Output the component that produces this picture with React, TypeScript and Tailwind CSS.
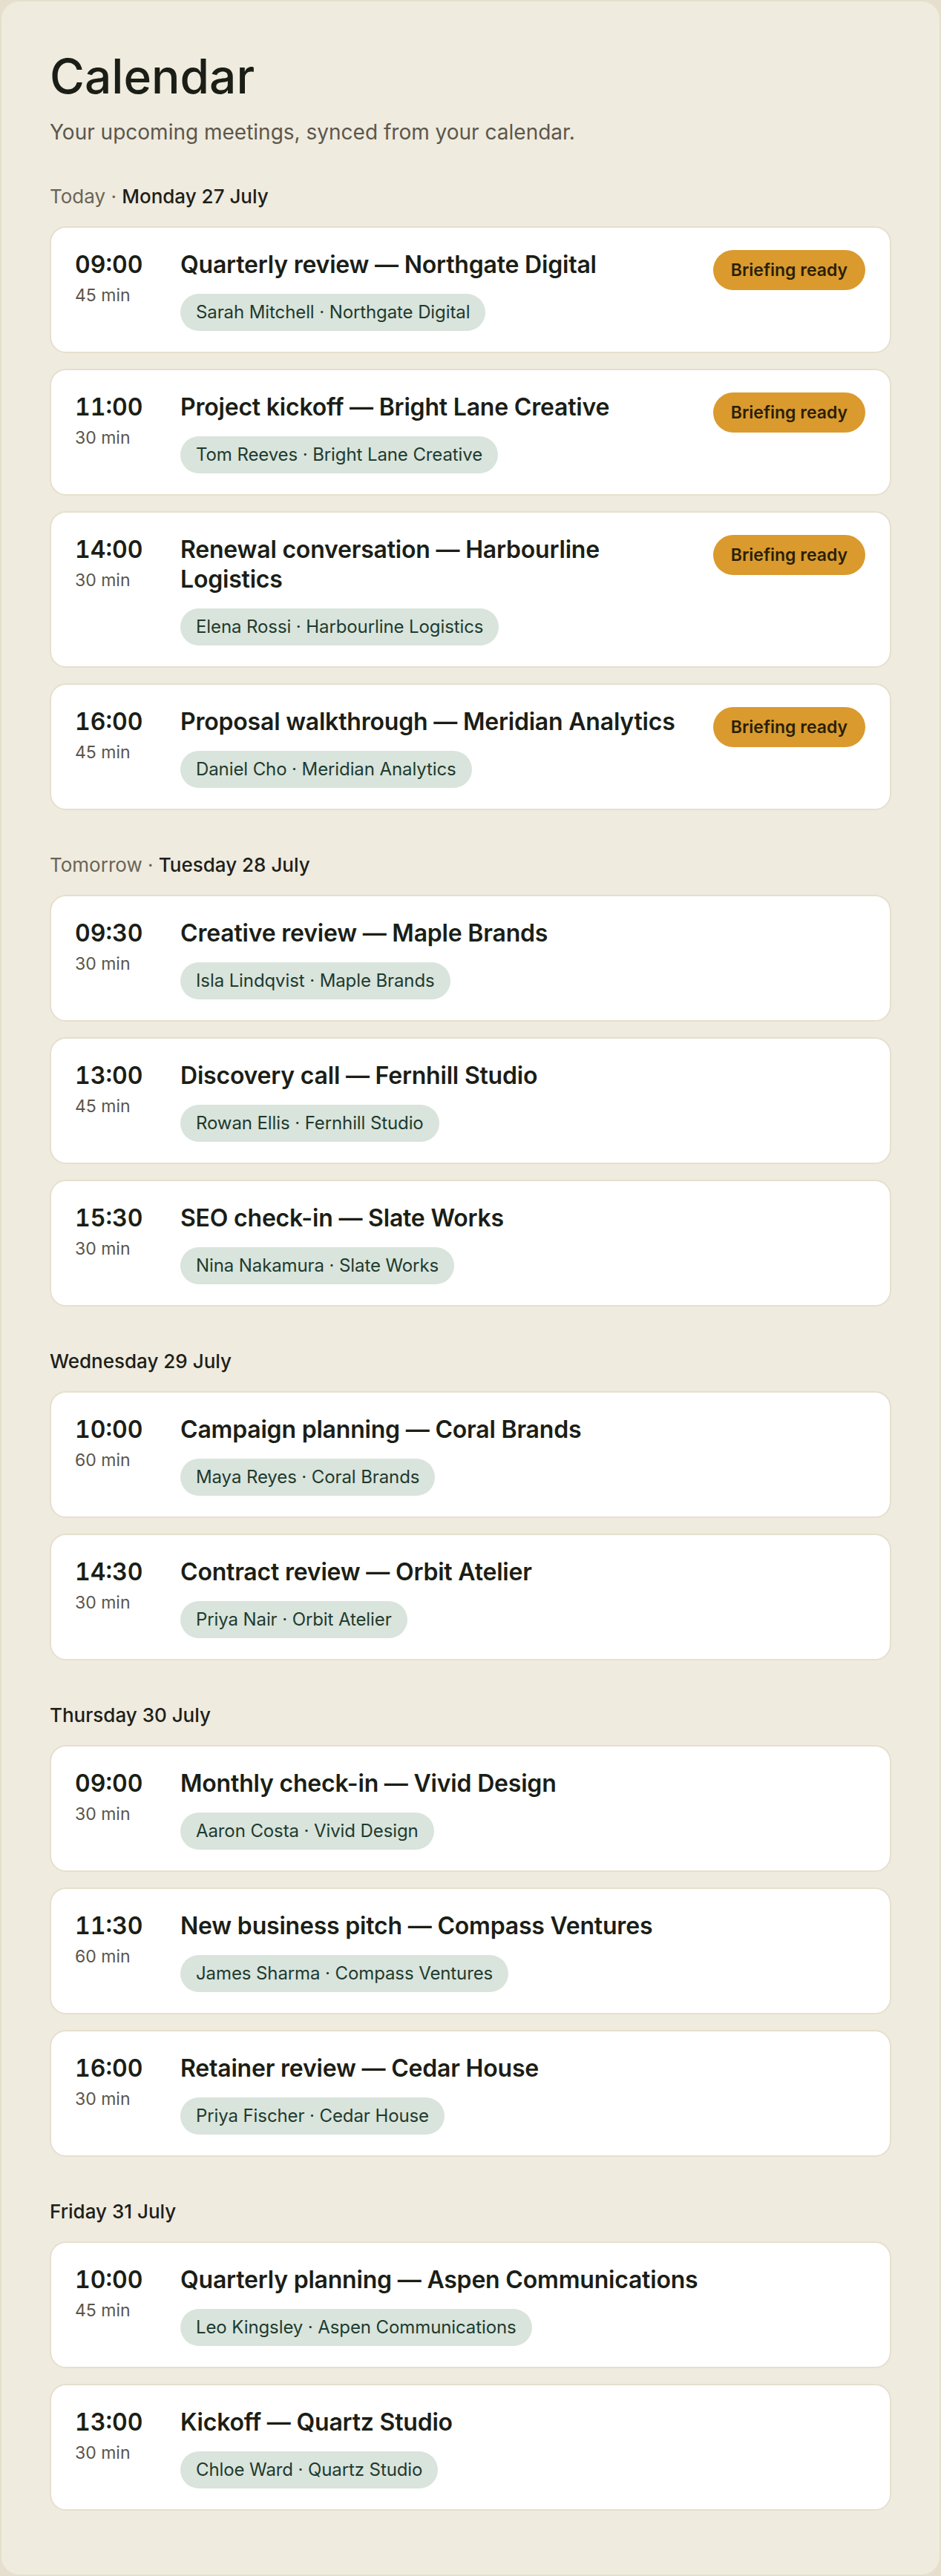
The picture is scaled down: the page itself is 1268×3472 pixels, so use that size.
import React from "react";

interface Meeting {
  time: string;
  duration: string;
  title: string;
  contact: string;
  briefing?: boolean;
}

interface DaySection {
  prefix?: string;
  date: string;
  meetings: Meeting[];
}

const days: DaySection[] = [
  {
    prefix: "Today",
    date: "Monday 27 July",
    meetings: [
      { time: "09:00", duration: "45 min", title: "Quarterly review — Northgate Digital", contact: "Sarah Mitchell · Northgate Digital", briefing: true },
      { time: "11:00", duration: "30 min", title: "Project kickoff — Bright Lane Creative", contact: "Tom Reeves · Bright Lane Creative", briefing: true },
      { time: "14:00", duration: "30 min", title: "Renewal conversation — Harbourline Logistics", contact: "Elena Rossi · Harbourline Logistics", briefing: true },
      { time: "16:00", duration: "45 min", title: "Proposal walkthrough — Meridian Analytics", contact: "Daniel Cho · Meridian Analytics", briefing: true },
    ],
  },
  {
    prefix: "Tomorrow",
    date: "Tuesday 28 July",
    meetings: [
      { time: "09:30", duration: "30 min", title: "Creative review — Maple Brands", contact: "Isla Lindqvist · Maple Brands" },
      { time: "13:00", duration: "45 min", title: "Discovery call — Fernhill Studio", contact: "Rowan Ellis · Fernhill Studio" },
      { time: "15:30", duration: "30 min", title: "SEO check-in — Slate Works", contact: "Nina Nakamura · Slate Works" },
    ],
  },
  {
    date: "Wednesday 29 July",
    meetings: [
      { time: "10:00", duration: "60 min", title: "Campaign planning — Coral Brands", contact: "Maya Reyes · Coral Brands" },
      { time: "14:30", duration: "30 min", title: "Contract review — Orbit Atelier", contact: "Priya Nair · Orbit Atelier" },
    ],
  },
  {
    date: "Thursday 30 July",
    meetings: [
      { time: "09:00", duration: "30 min", title: "Monthly check-in — Vivid Design", contact: "Aaron Costa · Vivid Design" },
      { time: "11:30", duration: "60 min", title: "New business pitch — Compass Ventures", contact: "James Sharma · Compass Ventures" },
      { time: "16:00", duration: "30 min", title: "Retainer review — Cedar House", contact: "Priya Fischer · Cedar House" },
    ],
  },
  {
    date: "Friday 31 July",
    meetings: [
      { time: "10:00", duration: "45 min", title: "Quarterly planning — Aspen Communications", contact: "Leo Kingsley · Aspen Communications" },
      { time: "13:00", duration: "30 min", title: "Kickoff — Quartz Studio", contact: "Chloe Ward · Quartz Studio" },
    ],
  },
];

const MeetingCard = ({ meeting }: { meeting: Meeting }) => {
  return (
    <div className="flex gap-8 rounded-[22px] border-2 border-[#e6dfce] bg-white pl-8 pr-[33px] pt-[30px] pb-[28px]">
      {/* Time column */}
      <div className="w-[110px] shrink-0">
        <div className="text-[32px] leading-[40px] font-semibold text-[#1b1e16] tabular-nums">
          {meeting.time}
        </div>
        <div className="mt-[5px] text-[23px] leading-[32px] text-[#5a554b]">
          {meeting.duration}
        </div>
      </div>

      {/* Details */}
      <div className="flex min-w-0 flex-1 items-start gap-5">
        <div className="min-w-0 flex-1">
          <h3 className="text-[32px] leading-[40px] font-semibold tracking-[-0.2px] text-[#1b1e16]">
            {meeting.title}
          </h3>
          <div className="mt-[19px] flex">
            <span className="rounded-full bg-[#d9e4dc] px-[21px] py-[9px] text-[24px] leading-[32px] tracking-[-0.1px] text-[#1e3b2f]">
              {meeting.contact}
            </span>
          </div>
        </div>
        {meeting.briefing && (
          <span className="shrink-0 rounded-full bg-[#da9a2e] px-[24px] py-[11px] text-[23px] leading-[32px] font-semibold text-[#2a1f06]">
            Briefing ready
          </span>
        )}
      </div>
    </div>
  );
};

const App = () => {
  return (
    <div
      className="min-h-screen bg-[#e6dfcd] p-[2px]"
      style={{ fontFamily: "Inter, 'Liberation Sans', sans-serif" }}
    >
      <div className="rounded-[24px] bg-[#efebdf] px-[65px] pt-[69px] pb-[86px]">
        <h1 className="text-[64px] leading-none font-medium text-[#1b1e16]">Calendar</h1>
        <p className="mt-[23px] text-[28px] leading-[40px] text-[#5c574c]">
          Your upcoming meetings, synced from your calendar.
        </p>

        <div className="mt-[49px] flex flex-col gap-[56px]">
          {days.map((day) => (
            <section key={day.date}>
              <h2 className="text-[26px] leading-[36px] font-medium text-[#1d2018]">
                {day.prefix && (
                  <span className="font-normal text-[#6a6456]">{day.prefix} · </span>
                )}
                {day.date}
              </h2>
              <div className="mt-[22px] flex flex-col gap-[21px]">
                {day.meetings.map((meeting) => (
                  <MeetingCard key={meeting.time + meeting.title} meeting={meeting} />
                ))}
              </div>
            </section>
          ))}
        </div>
      </div>
    </div>
  );
};

export default App;
